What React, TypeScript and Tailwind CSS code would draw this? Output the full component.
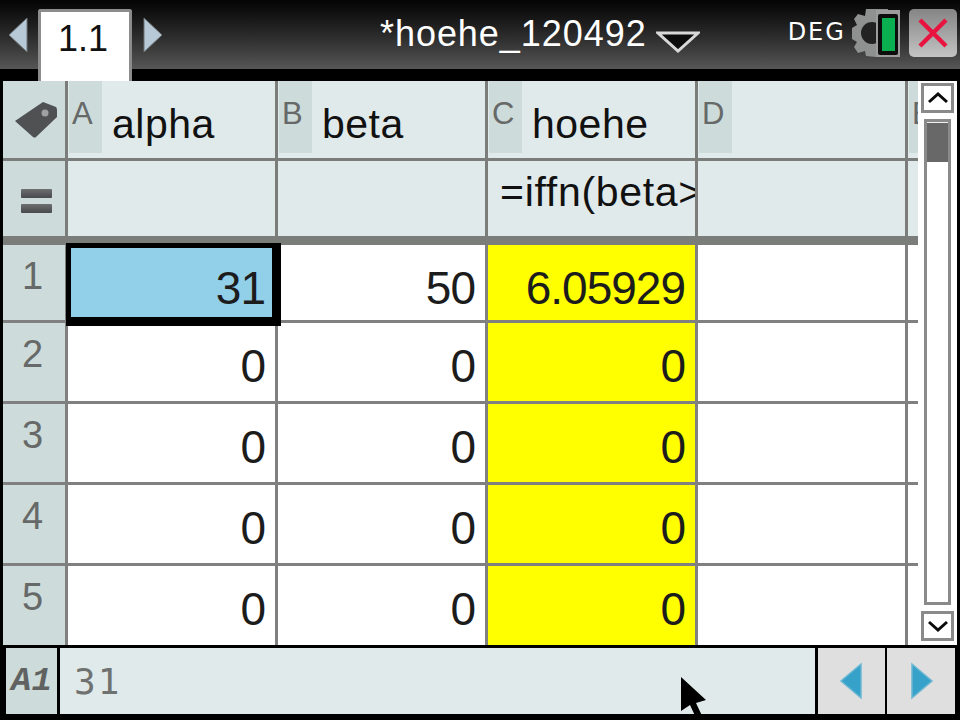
const fontFamily = "font-['Liberation_Sans',sans-serif]"

const colLetters = ['A', 'B', 'C', 'D']
const colNames = ['alpha', 'beta', 'hoehe', '']
const rows = [
  ['31', '50', '6.05929'],
  ['0', '0', '0'],
  ['0', '0', '0'],
  ['0', '0', '0'],
  ['0', '0', '0'],
]
const rowHeights = ['h-[78px]', 'h-[81px]', 'h-[81px]', 'h-[81px]', 'h-[79px]']

function TagIcon() {
  return (
    <svg width="44" height="40" viewBox="0 0 44 40">
      <path d="M1 21 L29 2 L42 7 Q43 8 43 10 L43 17 L22 37 Q21 38 19 37 Z" fill="#505153" />
      <circle cx="31" cy="13" r="3.5" fill="#a0a2a2" />
    </svg>
  )
}

function BatteryIcon() {
  return (
    <svg width="48" height="48" viewBox="0 0 48 48">
      <path
        d="M14 0 L24 0 L36 0 L36 48 L24 48 L14 47 L13 42 L6 44 L2 38 L5 33 L0 30 L0 19 L5 16 L2 10 L6 5 L13 7 Z"
        fill="#8f9190"
      />
      <circle cx="20" cy="24" r="11" fill="#222" />
      <rect x="24" y="1" width="24" height="47" fill="#9c9c9c" />
      <rect x="26" y="5" width="20" height="41" rx="2" fill="#0d0d0d" />
      <rect x="30" y="9" width="13" height="33" fill="#0ab04f" />
    </svg>
  )
}

export default function App() {
  return (
    <div className={`w-[960px] h-[720px] bg-black overflow-hidden relative ${fontFamily}`}>
      {/* Title bar */}
      <div className="h-[69px] bg-gradient-to-b from-[#050505] to-[#565656] relative flex items-start">
        <svg className="mt-[17px] ml-[8px]" width="20" height="36" viewBox="0 0 20 36">
          <path d="M19 1 L19 35 L1 18 Z" fill="#b7c9d6" stroke="#6d7478" />
        </svg>
        <div className="w-[94px] h-[72px] mt-[9px] ml-[10px] border-x-[3px] border-t-[3px] border-[#8c8c8c] rounded-t-[3px] bg-white flex justify-center shrink-0">
          <span className="text-[36px] leading-none mt-[9px] mr-[4px] text-[#111]">1.1</span>
        </div>
        <svg className="mt-[17px] ml-[11px]" width="20" height="36" viewBox="0 0 20 36">
          <path d="M1 1 L1 35 L19 18 Z" fill="#b7c9d6" stroke="#6d7478" />
        </svg>
        <span className="ml-[217px] mt-[16px] text-[36px] leading-none tracking-[0.95px] text-white whitespace-nowrap">*hoehe_120492</span>
        <svg className="ml-[9px] mt-[31px]" width="44" height="22" viewBox="0 0 44 22">
          <path d="M2 2 L42 2 L22 20 Z" fill="#0c0c0c" stroke="#d8d8d8" strokeWidth="3" />
        </svg>
        <span className="ml-[88px] mt-[20px] text-[24px] leading-none tracking-[2px] text-white font-['DejaVu_Sans',sans-serif]">DEG</span>
        <div className="absolute left-[852px] top-[9px]">
          <BatteryIcon />
        </div>
        <div className="absolute left-[909px] top-[9px] w-[48px] h-[48px] rounded-[5px] bg-gradient-to-b from-[#858585] to-[#c4c4c4] flex items-center justify-center">
          <svg width="32" height="32" viewBox="0 0 32 32">
            <path d="M3 3 L29 29 M29 3 L3 29" stroke="#e8143f" strokeWidth="4.5" />
          </svg>
        </div>
      </div>

      {/* Main spreadsheet area */}
      <div className="mt-[12px] ml-[3px] w-[954px] h-[564px] bg-white flex">
        <div className="w-[915px] bg-white">
          {/* Column letters and names */}
          <div className="h-[80px] border-b-[3px] border-[#7a7d79] grid grid-cols-[62px_207px_207px_207px_207px_10px] gap-x-[3px] bg-[#7a7d79]">
            <div className="bg-[#cddbda] flex items-center justify-center pl-[4px]">
              <TagIcon />
            </div>
            {colLetters.map((letter, i) => (
              <div key={letter} className="bg-[#e1eaea] flex items-start relative">
                <div className="w-[33px] h-[72px] ml-[1px] bg-[#cddbda] text-[#666968] text-[31px] leading-none pt-[17px] pl-[3px]">{letter}</div>
                <span className="ml-[10px] mt-[23px] text-[41px] tracking-[0.5px] leading-none text-[#111]">{colNames[i]}</span>
              </div>
            ))}
            <div className="bg-[#e1eaea] overflow-hidden">
              <div className="ml-[1px] w-[9px] h-[72px] bg-[#cddbda] text-[#666968] text-[31px] leading-none pt-[17px] pl-[3px] overflow-hidden">E</div>
            </div>
          </div>
          {/* Formula row */}
          <div className="h-[84px] border-b-[9px] border-[#7a7d79] grid grid-cols-[62px_207px_207px_207px_207px_10px] gap-x-[3px] bg-[#7a7d79]">
            <div className="bg-[#cddbda] flex flex-col items-center justify-center gap-[6px] pt-[5px] pl-[4px]">
              <div className="w-[31px] h-[9px] bg-gradient-to-b from-[#6e6f71] to-[#48494b] rounded-[1px]" />
              <div className="w-[31px] h-[9px] bg-gradient-to-b from-[#6e6f71] to-[#48494b] rounded-[1px]" />
            </div>
            <div className="bg-[#e1eaea]" />
            <div className="bg-[#e1eaea]" />
            <div className="bg-[#e1eaea] overflow-hidden whitespace-nowrap text-[41px] tracking-[0.7px] leading-none pl-[12px] pt-[11px] text-[#111]">=iffn(beta&gt;</div>
            <div className="bg-[#e1eaea]" />
            <div className="bg-[#e1eaea]" />
          </div>
          {/* Data rows */}
          {rows.map((row, r) => (
            <div
              key={r}
              className={`${rowHeights[r]} ${r < 4 ? 'border-b-[3px]' : ''} border-[#808080] grid grid-cols-[62px_207px_207px_207px_207px_10px] gap-x-[3px] bg-[#808080]`}
            >
              <div className="bg-[#cddbda] text-[#666968] text-[38px] leading-none text-center pt-[12px] pr-[3px]">{r + 1}</div>
              {row.map((value, c) => (
                <div
                  key={c}
                  className={`relative text-[46px] tracking-[-1px] leading-none text-right pr-[10px] pt-[20px] text-[#1c1c1c] ${c === 2 ? 'bg-[#ffff00]' : 'bg-white'} ${r === 0 && c === 0 ? 'z-10' : ''}`}
                >
                  {r === 0 && c === 0 && (
                    <div className="absolute -left-[2px] -top-[2px] w-[215px] h-[83px] border-l-[5px] border-t-[5px] border-r-[9px] border-b-[9px] border-black bg-[#92cfe8]" />
                  )}
                  <span className="relative">{value}</span>
                </div>
              ))}
              <div className="bg-white" />
              <div className="bg-white" />
            </div>
          ))}
        </div>

        {/* Scroll bar */}
        <div className="flex-1 flex flex-col items-center pt-[2px]">
          <div className="w-[33px] h-[30px] border-[3px] border-[#8a8a8a] bg-white flex items-center justify-center">
            <svg width="20" height="12" viewBox="0 0 20 12">
              <path d="M1 10 L10 2 L19 10" fill="none" stroke="#0a0a0a" strokeWidth="3" />
            </svg>
          </div>
          <div className="w-[27px] h-[486px] mt-[6px] border-[3px] border-[#8a8a8a] bg-white">
            <div className="h-[40px] bg-[#686868] border-t-[1px] border-[#f0f0f0]" />
          </div>
          <div className="w-[33px] h-[30px] mt-[6px] border-[3px] border-[#8a8a8a] bg-white flex items-center justify-center">
            <svg width="20" height="12" viewBox="0 0 20 12">
              <path d="M1 2 L10 10 L19 2" fill="none" stroke="#0a0a0a" strokeWidth="3" />
            </svg>
          </div>
        </div>
      </div>

      {/* Entry line */}
      <div className="mt-[3px] h-[66px] flex pl-[6px]">
        <div className="w-[51px] bg-[#cddbda] flex items-center justify-center font-['Liberation_Mono',monospace] italic font-bold text-[34px] text-[#5f6261]">A1</div>
        <div className="w-[755px] ml-[3px] bg-[#e1eaea] text-[#6f7271] text-[36px] tracking-[2px] leading-none pl-[14px] pt-[16px] font-['DejaVu_Sans_Mono',monospace]">31</div>
        <div className="w-[67px] ml-[3px] bg-[#dfdfdf] flex items-center justify-center pr-[2px]">
          <svg width="24" height="38" viewBox="0 0 24 38">
            <path d="M22 2 L22 36 L2 19 Z" fill="#36a1c9" stroke="#6cb8d4" strokeWidth="1.5" />
          </svg>
        </div>
        <div className="w-[68px] ml-[2px] bg-[#dfdfdf] flex items-center justify-center pl-[2px]">
          <svg width="24" height="38" viewBox="0 0 24 38">
            <path d="M2 2 L2 36 L22 19 Z" fill="#36a1c9" stroke="#6cb8d4" strokeWidth="1.5" />
          </svg>
        </div>
      </div>

      {/* Mouse pointer */}
      <svg className="absolute left-[680px] top-[677px]" width="28" height="43" viewBox="0 0 28 43">
        <path d="M1 0 L26 23 L16 26 L24 43 L17 43 L10 28 L1 34 Z" fill="#000" />
      </svg>
    </div>
  )
}
